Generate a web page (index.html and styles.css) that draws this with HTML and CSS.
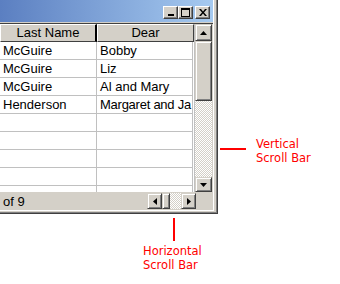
FILE: index.html
```html
<!DOCTYPE html>
<html>
<head>
<meta charset="utf-8">
<link rel="stylesheet" href="styles.css">
</head>
<body>
<div class="page">
  <div class="window">
    <div class="client">
      <div class="titlebar">
        <div class="caption-btns">
          <div class="cbtn"><svg width="6" height="2"><rect width="6" height="2" fill="#000"/></svg></div>
          <div class="cbtn"><svg width="9" height="9"><path d="M0 0H9V9H0Z M1 2V8H8V2Z" fill="#000" fill-rule="evenodd"/></svg></div>
          <div class="cbtn close"><svg width="8" height="7"><path d="M0 0H2L4 2.5L6 0H8L5 3.5L8 7H6L4 4.5L2 7H0L3 3.5Z" fill="#000"/></svg></div>
        </div>
      </div>
      <div class="sep"></div>
      <div class="main">
        <div class="grid">
          <div class="hdr">Last Name</div>
          <div class="hdr">Dear</div>
          <div class="cell">McGuire</div><div class="cell">Bobby</div>
          <div class="cell">McGuire</div><div class="cell">Liz</div>
          <div class="cell">McGuire</div><div class="cell">Al and Mary</div>
          <div class="cell">Henderson</div><div class="cell tight">Margaret and Ja</div>
          <div class="cell"></div><div class="cell"></div>
          <div class="cell"></div><div class="cell"></div>
          <div class="cell"></div><div class="cell"></div>
          <div class="cell"></div><div class="cell"></div>
          <div class="cell"></div><div class="cell"></div>
        </div>
        <div class="vscroll">
          <div class="sbtn up"><svg width="7" height="4"><path d="M3.5 0L7 4H0Z" fill="#000"/></svg></div>
          <div class="thumb vthumb"></div>
          <div class="track"></div>
          <div class="sbtn down"><svg width="7" height="4"><path d="M0 0H7L3.5 4Z" fill="#000"/></svg></div>
        </div>
      </div>
      <div class="status">
        <span class="count">of 9</span>
        <div class="hscroll">
          <div class="sbtn hbtn"><svg width="4" height="7"><path d="M4 0V7L0 3.5Z" fill="#000"/></svg></div>
          <div class="thumb hthumb"></div>
          <div class="track htrack"></div>
          <div class="sbtn hbtn"><svg width="4" height="7"><path d="M0 0L4 3.5L0 7Z" fill="#000"/></svg></div>
        </div>
      </div>
    </div>
  </div>
  <div class="callout vcall">
    <div class="hline"></div>
    <div class="label">Vertical<br>Scroll Bar</div>
  </div>
  <div class="callout hcall">
    <div class="vline"></div>
    <div class="label">Horizontal<br>Scroll Bar</div>
  </div>
</div>
</body>
</html>
```
FILE: styles.css
```css
html, body {
  margin: 0;
  padding: 0;
  background: #fff;
}
body {
  width: 340px;
  height: 284px;
  overflow: hidden;
  font-family: "Liberation Sans", Arial, sans-serif;
  font-size: 13px;
  color: #000;
}
.page {
  display: grid;
  grid-template-columns: 218px 1fr;
  grid-template-rows: 214px 1fr;
  width: 340px;
  height: 284px;
}
.window {
  grid-column: 1;
  grid-row: 1;
  box-sizing: border-box;
  width: 218px;
  height: 214px;
  background: #d4d0c8;
  border-right: 1px solid #404040;
  border-bottom: 1px solid #404040;
  padding-right: 3px;
  padding-bottom: 2px;
  box-shadow: inset -1px -1px #808080;
}
.client {
  box-sizing: border-box;
  width: 214px;
  height: 211px;
  border-right: 1px solid #fff;
  border-bottom: 1px solid #fff;
  display: flex;
  flex-direction: column;
}
.titlebar {
  height: 22px;
  flex: none;
  background: linear-gradient(90deg, #5b7fc1, #a6caf0);
  display: flex;
  justify-content: flex-end;
  align-items: flex-start;
}
.caption-btns {
  display: flex;
  margin-top: 6px;
  margin-right: 3px;
}
.cbtn {
  box-sizing: border-box;
  width: 15px;
  height: 13px;
  background: #d4d0c8;
  border: 1px solid;
  border-color: #fff #404040 #404040 #fff;
  box-shadow: inset -1px -1px #808080;
  display: flex;
  align-items: flex-end;
  justify-content: center;
  padding-bottom: 2px;
}
.cbtn svg { display: block; }
.cbtn:nth-child(2) { align-items: center; padding-bottom: 0; }
.cbtn.close { margin-left: 2px; align-items: center; padding-bottom: 0; }
.sep {
  height: 2px;
  flex: none;
  box-shadow: inset 0 -1px #404040;
}
.main {
  height: 168px;
  flex: none;
  display: flex;
}
.grid {
  width: 194px;
  flex: none;
  background: #fff;
  display: grid;
  grid-template-columns: 97px 97px;
  grid-auto-rows: 18px;
  grid-template-rows: 18px;
  overflow: hidden;
  align-content: start;
}
.hdr {
  box-sizing: border-box;
  height: 18px;
  background: #d4d0c8;
  border-top: 1px solid #fff;
  border-left: 1px solid #fff;
  border-right: 2px solid #000;
  border-bottom: 1px solid #404040;
  text-align: center;
  line-height: 16px;
  white-space: nowrap;
}
.hdr:nth-child(2) { border-right: 1px solid #404040; }
.cell {
  box-sizing: border-box;
  height: 18px;
  border-right: 1px solid #c0c0c0;
  border-bottom: 1px solid #c0c0c0;
  padding-left: 3px;
  line-height: 17px;
  white-space: nowrap;
  overflow: hidden;
}
.cell:nth-child(2n) { width: 96px; }
.cell.tight { letter-spacing: -0.25px; }
.vscroll {
  width: 18px;
  flex: none;
  margin-right: 1px;
  box-sizing: border-box;
  border-left: 1px solid #c0c0c0;
  background: #fff;
  display: flex;
  flex-direction: column;
}
.sbtn, .thumb {
  box-sizing: border-box;
  background: #d4d0c8;
  border: 1px solid;
  border-color: #d4d0c8 #404040 #404040 #d4d0c8;
  box-shadow: inset 1px 1px #fff, inset -1px -1px #808080;
  display: flex;
  align-items: center;
  justify-content: center;
  flex: none;
}
.sbtn svg { display: block; }
.up { height: 17px; }
.vthumb { height: 60px; }
.track {
  flex: 1;
  background: repeating-conic-gradient(#d4d0c8 0 25%, #fff 0 50%) 0 0 / 2px 2px;
}
.down { height: 15px; }
.status {
  height: 18px;
  flex: none;
  display: flex;
  align-items: flex-start;
  justify-content: space-between;
}
.count {
  padding-left: 3px;
  line-height: 17px;
  margin-top: 1px;
}
.hscroll {
  display: flex;
  height: 16px;
  margin-top: 1px;
  margin-right: 17px;
}
.hbtn { width: 15px; height: 16px; }
.hthumb { width: 8px; height: 16px; }
.htrack { width: 11px; flex: none; }
.callout {
  color: #f00;
  font-family: "DejaVu Sans", Verdana, sans-serif;
  font-size: 11.5px;
  line-height: 14px;
}
.vcall {
  grid-column: 2;
  grid-row: 1;
  display: flex;
  align-items: flex-start;
  margin-top: 137px;
  margin-left: 2px;
}
.hline {
  width: 26px;
  height: 2px;
  background: #f00;
  margin-top: 11px;
  margin-right: 10px;
}
.hcall {
  grid-column: 1;
  grid-row: 2;
  display: flex;
  flex-direction: column;
  align-items: center;
  justify-self: start;
  margin-left: 143px;
  margin-top: 4px;
  width: 61px;
}
.vline {
  width: 2px;
  height: 23px;
  background: #f00;
  margin-bottom: 3px;
}
.hcall .label { align-self: flex-start; }
```
